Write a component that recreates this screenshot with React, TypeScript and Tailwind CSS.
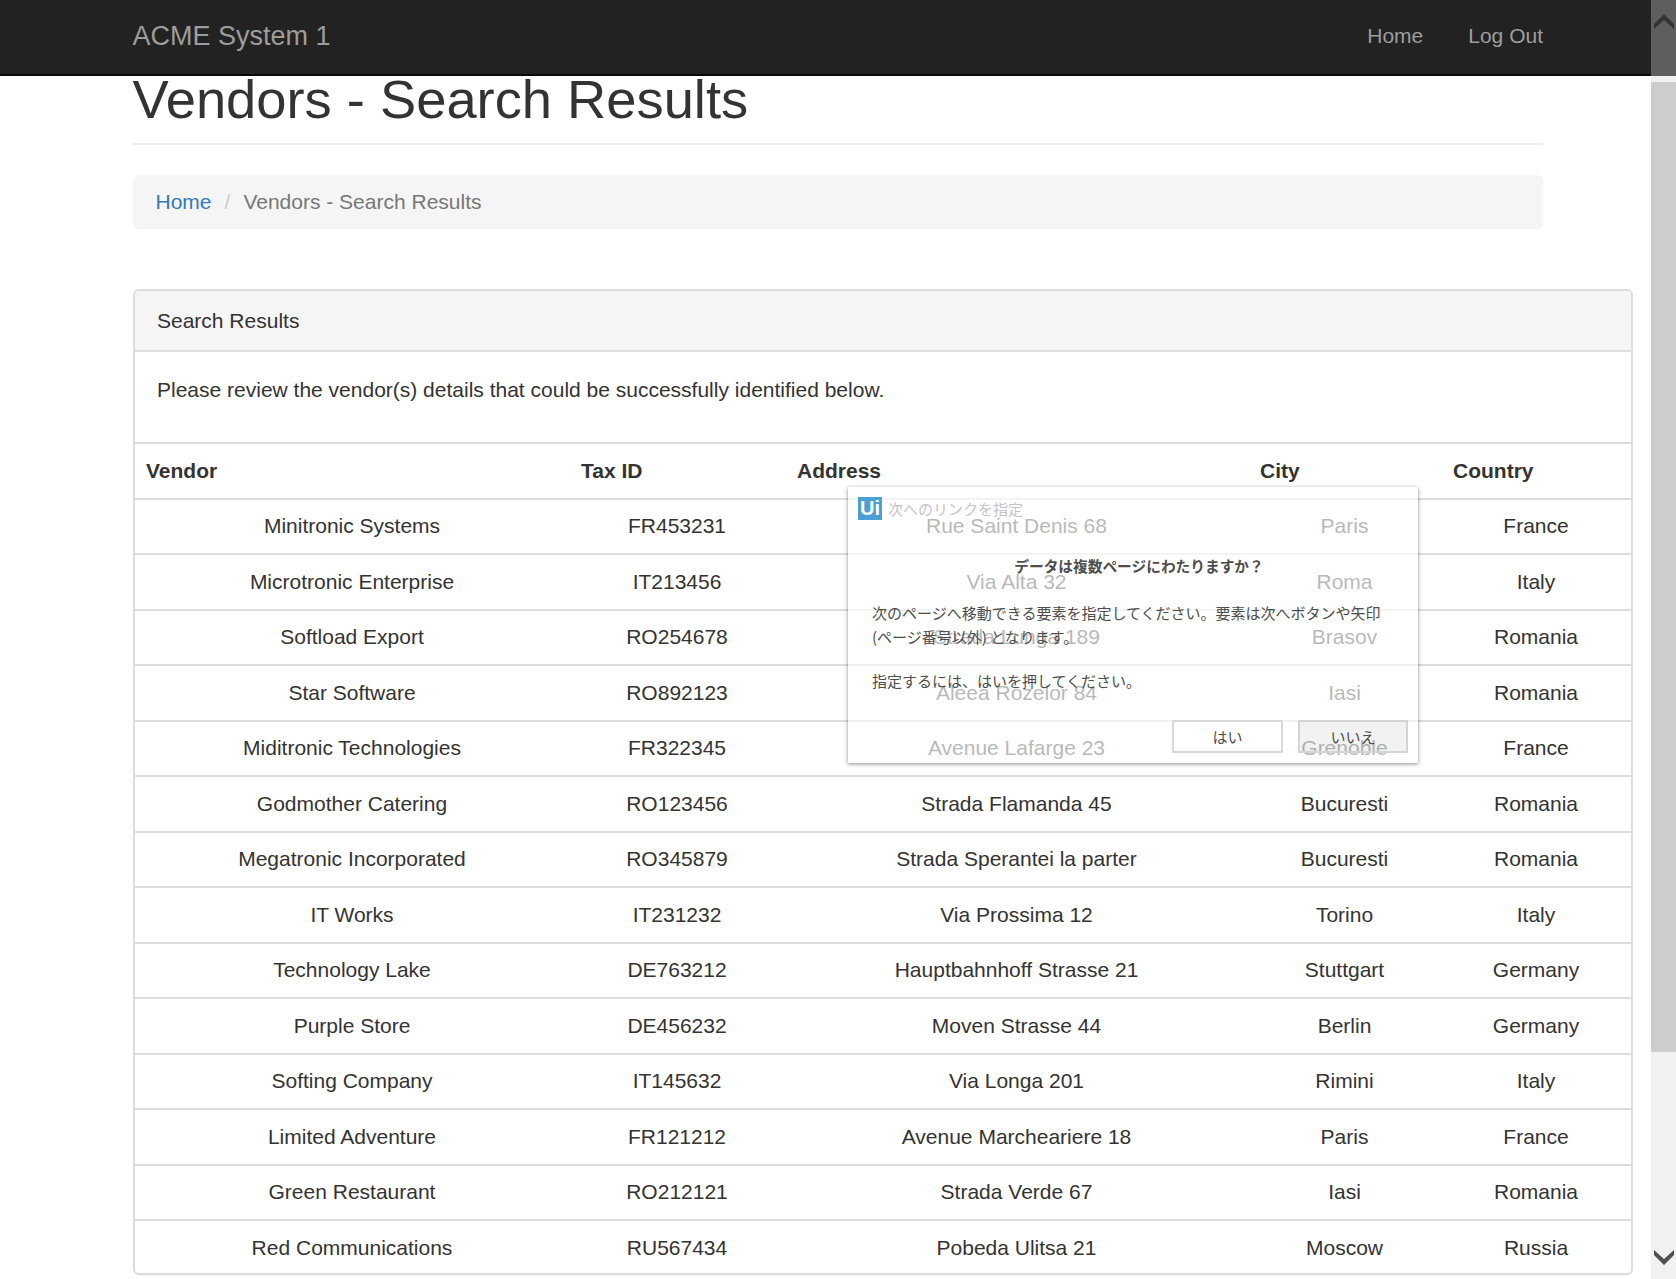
const rows = [
  ["Minitronic Systems", "FR453231", "Rue Saint Denis 68", "Paris", "France"],
  ["Microtronic Enterprise", "IT213456", "Via Alta 32", "Roma", "Italy"],
  ["Softload Export", "RO254678", "Strada Lunga 189", "Brasov", "Romania"],
  ["Star Software", "RO892123", "Aleea Rozelor 84", "Iasi", "Romania"],
  ["Miditronic Technologies", "FR322345", "Avenue Lafarge 23", "Grenoble", "France"],
  ["Godmother Catering", "RO123456", "Strada Flamanda 45", "Bucuresti", "Romania"],
  ["Megatronic Incorporated", "RO345879", "Strada Sperantei la parter", "Bucuresti", "Romania"],
  ["IT Works", "IT231232", "Via Prossima 12", "Torino", "Italy"],
  ["Technology Lake", "DE763212", "Hauptbahnhoff Strasse 21", "Stuttgart", "Germany"],
  ["Purple Store", "DE456232", "Moven Strasse 44", "Berlin", "Germany"],
  ["Softing Company", "IT145632", "Via Longa 201", "Rimini", "Italy"],
  ["Limited Adventure", "FR121212", "Avenue Marcheariere 18", "Paris", "France"],
  ["Green Restaurant", "RO212121", "Strada Verde 67", "Iasi", "Romania"],
];
const lastRow = ["Red Communications", "RU567434", "Pobeda Ulitsa 21", "Moscow", "Russia"];

function Scrollbar() {
  return (
    <div className="w-[25px] shrink-0 flex flex-col bg-[#f1f1f1]">
      <div className="h-[76px] bg-[#5e5e5e] flex justify-center pt-[14px]">
        <svg width="20" height="15" viewBox="0 0 20 15">
          <path d="M0 10 L10 0 L20 10 L20 15 L10 6 L0 15 Z" fill="#333333" />
        </svg>
      </div>
      <div className="h-[6px] bg-[#f1f1f1]" />
      <div className="h-[970px] bg-[#cdcdcd]" />
      <div className="flex-1 flex items-end justify-center pb-[14px]">
        <svg width="20" height="15" viewBox="0 0 20 15">
          <path d="M0 5 L10 15 L20 5 L20 0 L10 9 L0 0 Z" fill="#505050" />
        </svg>
      </div>
    </div>
  );
}

function Dialog() {
  return (
    <div className="absolute left-[848px] top-[487px] w-[570px] h-[276px] bg-white/65 shadow-[0_1px_4px_rgba(0,0,0,0.45)] flex flex-col text-[#4d4d4d] text-[15px] font-['Noto_Sans_CJK_JP',sans-serif]">
      <div className="flex items-center h-[23px] mt-[10px] ml-[10px]">
        <div className="w-[24px] h-[23px] bg-[#4b9fd5] text-white text-[20px] leading-[23px] text-center font-bold font-['Liberation_Sans',sans-serif]">Ui</div>
        <div className="ml-[6px] text-[#c4c4c4] leading-[23px]">次へのリンクを指定</div>
      </div>
      <div className="mt-[35px] h-[22px] leading-[22px] text-center text-[14.7px] font-semibold pl-[12px]">データは複数ページにわたりますか？</div>
      <div className="mt-[24px] ml-[24px] leading-[24px] w-[520px]">
        次のページへ移動できる要素を指定してください。要素は次へボタンや矢印
        <br />
        (ページ番号以外) となります。
      </div>
      <div className="mt-[20px] ml-[24px] leading-[24px]">指定するには、はいを押してください。</div>
      <div className="flex justify-end gap-[15px] mt-[27px] mr-[10px]">
        <div className="w-[111px] h-[33px] border-2 border-[#d8d8d8] leading-[29px] text-center">はい</div>
        <div className="w-[110px] h-[33px] border-2 border-[#d4d4d4] bg-black/5 leading-[29px] text-center">いいえ</div>
      </div>
    </div>
  );
}

export default function App() {
  return (
    <div className="relative h-[1279px] overflow-hidden flex bg-white text-[21px] leading-[30px] text-[#333333] font-['Liberation_Sans',sans-serif]">
      <div className="flex-1 min-w-0">
        <nav className="h-[76px] bg-[#222222] border-b-2 border-[#080808] pl-[132.5px] pr-[108px] pb-[2px] flex items-center justify-between text-[#9d9d9d]">
          <div className="text-[27px]">ACME System 1</div>
          <div className="flex gap-[45px]">
            <span>Home</span>
            <span>Log Out</span>
          </div>
        </nav>
        <div className="ml-[133px] w-[1410px]">
          <div className="h-[69px] border-b-2 border-[#eeeeee]">
            <h1 className="-ml-[0.5px] text-[54.3px] leading-[48px] font-normal">Vendors - Search Results</h1>
          </div>
          <div className="mt-[30px] h-[54px] rounded-[6px] bg-[#f5f5f5] px-[22.5px] flex items-center">
            <span className="text-[#337ab7]">Home</span>
            <span className="text-[#cccccc] px-[13px]">/</span>
            <span className="text-[#777777]">Vendors - Search Results</span>
          </div>
          <div className="mt-[60px] w-[1500px] rounded-[6px] border-2 border-[#dddddd] shadow-[0_1px_1px_rgba(0,0,0,0.05)]">
            <div className="h-[61px] bg-[#f5f5f5] rounded-t-[4px] border-b-2 border-[#dddddd] px-[22px] flex items-center">Search Results</div>
            <div className="h-[90px] px-[22px] pt-[23px]">Please review the vendor(s) details that could be successfully identified below.</div>
            <table className="w-full table-fixed border-collapse">
              <colgroup>
                <col className="w-[434px]" />
                <col className="w-[216px]" />
                <col className="w-[463px]" />
                <col className="w-[193px]" />
                <col />
              </colgroup>
              <thead>
                <tr className="h-[55.5px] border-t-2 border-[#dddddd]">
                  <th className="pl-[11px] pr-[12px] text-left font-bold">Vendor</th>
                  <th className="px-[12px] text-left font-bold">Tax ID</th>
                  <th className="px-[12px] text-left font-bold">Address</th>
                  <th className="px-[12px] text-left font-bold">City</th>
                  <th className="px-[12px] text-left font-bold">Country</th>
                </tr>
              </thead>
              <tbody>
                {rows.map((r) => (
                  <tr key={r[1]} className="h-[55.5px] border-t-2 border-[#dddddd]">
                    {r.map((c, i) => (
                      <td key={i} className="px-[12px] text-center">{c}</td>
                    ))}
                  </tr>
                ))}
                <tr className="h-[53px] border-t-2 border-[#dddddd]">
                  {lastRow.map((c, i) => (
                    <td key={i} className="px-[12px] pt-[2.5px] text-center">{c}</td>
                  ))}
                </tr>
              </tbody>
            </table>
          </div>
        </div>
      </div>
      <Scrollbar />
      <Dialog />
    </div>
  );
}
